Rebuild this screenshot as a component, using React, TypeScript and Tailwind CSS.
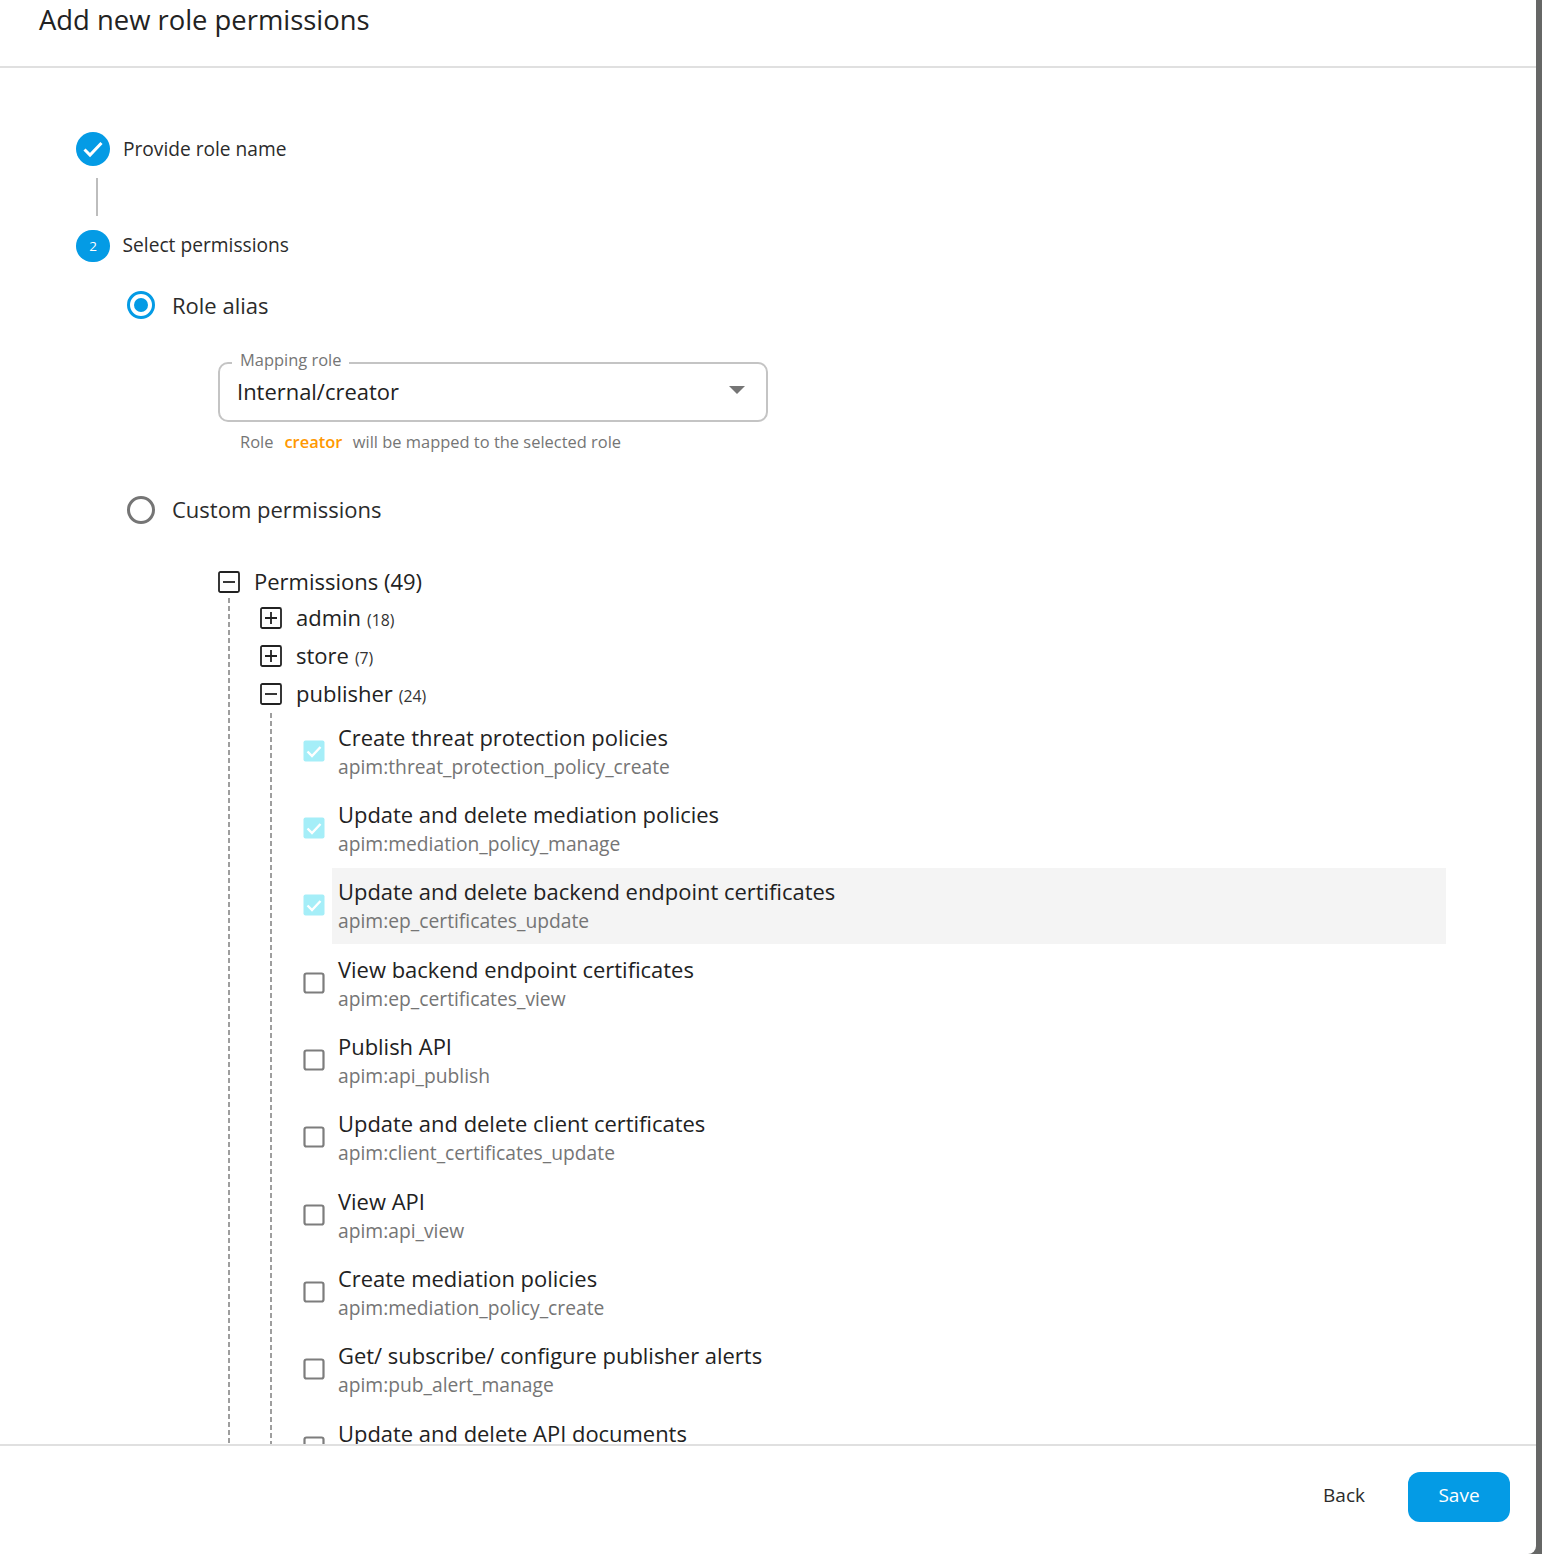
import React from "react";

const perms: { title: string; scope?: string; checked?: boolean; hover?: boolean }[] = [
  { title: "Create threat protection policies", scope: "apim:threat_protection_policy_create", checked: true },
  { title: "Update and delete mediation policies", scope: "apim:mediation_policy_manage", checked: true },
  { title: "Update and delete backend endpoint certificates", scope: "apim:ep_certificates_update", checked: true, hover: true },
  { title: "View backend endpoint certificates", scope: "apim:ep_certificates_view" },
  { title: "Publish API", scope: "apim:api_publish" },
  { title: "Update and delete client certificates", scope: "apim:client_certificates_update" },
  { title: "View API", scope: "apim:api_view" },
  { title: "Create mediation policies", scope: "apim:mediation_policy_create" },
  { title: "Get/ subscribe/ configure publisher alerts", scope: "apim:pub_alert_manage" },
  { title: "Update and delete API documents" },
];

const TreeBox = ({ open }: { open?: boolean }) => (
  <svg width="22" height="22" viewBox="0 0 22 22" className="shrink-0">
    <rect x="1" y="1" width="20" height="20" rx="1.5" fill="none" stroke="#222" strokeWidth="1.8" />
    <path d={open ? "M5 11h12" : "M5 11h12M11 5v12"} stroke="#222" strokeWidth="1.8" />
  </svg>
);

const DashedLine = () => (
  <div className="w-[2px] h-full bg-[repeating-linear-gradient(to_bottom,#9e9e9e_0,#9e9e9e_5px,transparent_5px,transparent_8px)]" />
);

const PermCheck = ({ checked }: { checked?: boolean }) =>
  checked ? (
    <svg width="22" height="22" viewBox="0 0 22 22" className="shrink-0 mb-[2px]">
      <rect x="0.5" y="0.5" width="21" height="21" rx="2" fill="#a5eef8" />
      <path d="M4.5 11.5l4.5 4.5 8.5-9" fill="none" stroke="#fff" strokeWidth="2.4" />
    </svg>
  ) : (
    <svg width="22" height="22" viewBox="0 0 22 22" className="shrink-0 mb-[2px]">
      <rect x="1.5" y="1.5" width="19" height="19" rx="2" fill="none" stroke="#7d7d7d" strokeWidth="2.2" />
    </svg>
  );

const PermRow = ({ title, scope, checked, hover }: { title: string; scope?: string; checked?: boolean; hover?: boolean }) => (
  <div className="flex items-center h-[77.33px] shrink-0">
    <div className="w-[62px] pl-[33px] shrink-0">
      <PermCheck checked={checked} />
    </div>
    <div className={`w-[1114px] h-[76px] pl-[6px] pt-[9px] ${hover ? "bg-[#f4f4f4]" : ""}`}>
      <div className="text-[21.95px] leading-[30px] text-[#222] whitespace-nowrap">{title}</div>
      {scope && <div className="text-[19.25px] leading-[28px] text-[#757575] whitespace-nowrap">{scope}</div>}
    </div>
  </div>
);

const TreeRow = ({ label, count, open }: { label: string; count: string; open?: boolean }) => (
  <div className="flex items-center h-[38px]">
    <TreeBox open={open} />
    <span className="ml-[14px] mb-[2px] text-[22px] text-[#222]">{label}</span>
    <span className="ml-[6px] mt-[5px] text-[15.8px] text-[#333]">{count}</span>
  </div>
);

const App: React.FC = () => {
  return (
    <div className="w-[1542px] h-[1554px] flex bg-[#666766] overflow-hidden font-['Open_Sans',sans-serif]">
      <div className="w-[1536px] h-full flex flex-col bg-white rounded-br-[8px]">
        <div className="h-[68px] shrink-0 border-b-2 border-[#e0e0e0] pl-[39px] text-[#222] text-[27.4px] leading-[39px]">
          Add new role permissions
        </div>

        <div className="flex-1 min-h-0 overflow-hidden pl-[76px] pt-[63px]">
          <div className="flex items-center h-[36px]">
            <div className="w-[34px] h-[34px] rounded-full bg-[#049be5] flex items-center justify-center">
              <svg width="22" height="22" viewBox="0 0 22 22">
                <path d="M2.5 11.5l5.5 5.5 11.5-12" fill="none" stroke="#fff" strokeWidth="3" />
              </svg>
            </div>
            <span className="ml-[13px] text-[19.15px] text-[#2b2b2b]">Provide role name</span>
          </div>
          <div className="ml-[20px] mt-[11px] w-[2px] h-[38px] bg-[#bdbdbd]" />
          <div className="flex items-center h-[32px] mt-[14px]">
            <div className="w-[34px] h-[32px] rounded-full bg-[#049be5] flex items-center justify-center text-white text-[13.5px]">
              2
            </div>
            <span className="ml-[12.5px] mb-[2px] text-[19.2px] text-[#2b2b2b]">Select permissions</span>
          </div>

          <div className="pl-[51px]">
            <div className="flex items-center h-[28px] mt-[29px]">
              <div className="w-[28px] h-[28px] rounded-full border-[3px] border-[#049be5] flex items-center justify-center">
                <div className="w-[14px] h-[14px] rounded-full bg-[#049be5]" />
              </div>
              <span className="ml-[17px] text-[22px] text-[#2b2b2b]">Role alias</span>
            </div>

            <div className="ml-[91px] mt-[43px] w-[550px] relative">
              <div className="h-[60px] border-2 border-[#c4c4c4] rounded-[10px] pl-[17px] flex items-center justify-between pr-[21px]">
                <span className="text-[21.95px] text-[#222]">Internal/creator</span>
                <svg width="16" height="8" viewBox="0 0 16 8" className="mb-[4px]">
                  <path d="M0 0h16l-8 8z" fill="#757575" />
                </svg>
              </div>
              <span className="absolute left-[14px] -top-[13px] bg-white px-[8px] text-[16.45px] leading-[22px] text-[#757575]">
                Mapping role
              </span>
              <div className="pl-[22px] mt-[8px] h-[24px] flex items-center text-[16.45px] text-[#757575] whitespace-nowrap">
                Role
                <span className="ml-[11px] mr-[10.5px] text-[#ff9800] font-semibold">creator</span>
                will be mapped to the selected role
              </div>
            </div>

            <div className="flex items-center h-[28px] mt-[41px]">
              <div className="mt-[2px] w-[28px] h-[28px] rounded-full border-[3px] border-[#757575]" />
              <span className="ml-[17px] text-[22px] text-[#2b2b2b]">Custom permissions</span>
            </div>

            <div className="ml-[91px] mt-[43px]">
              <div className="flex items-center h-[32px]">
                <TreeBox open />
                <span className="ml-[14px] mb-[2px] text-[22px] text-[#222]">Permissions (49)</span>
              </div>
              <div className="flex">
                <div className="w-[42px] pl-[10px] shrink-0">
                  <DashedLine />
                </div>
                <div>
                  <div className="mt-[1px]">
                    <TreeRow label="admin" count="(18)" />
                    <TreeRow label="store" count="(7)" />
                    <TreeRow label="publisher" count="(24)" open />
                  </div>
                  <div className="flex">
                    <div className="w-[10px] pl-[10px] shrink-0">
                      <DashedLine />
                    </div>
                    <div>
                      {perms.map((p) => (
                        <PermRow key={p.title} {...p} />
                      ))}
                    </div>
                  </div>
                </div>
              </div>
            </div>
          </div>
        </div>

        <div className="h-[110px] shrink-0 border-t-2 border-[#e0e0e0] flex items-center justify-end pr-[26px] pb-[6px]">
          <span className="text-[19px] text-[#2b2b2b] mr-[43px] mb-[4px]">Back</span>
          <button className="w-[102px] h-[50px] rounded-[12px] bg-[#049be5] text-white text-[19px] pb-[4px]">Save</button>
        </div>
      </div>
    </div>
  );
};

export default App;
